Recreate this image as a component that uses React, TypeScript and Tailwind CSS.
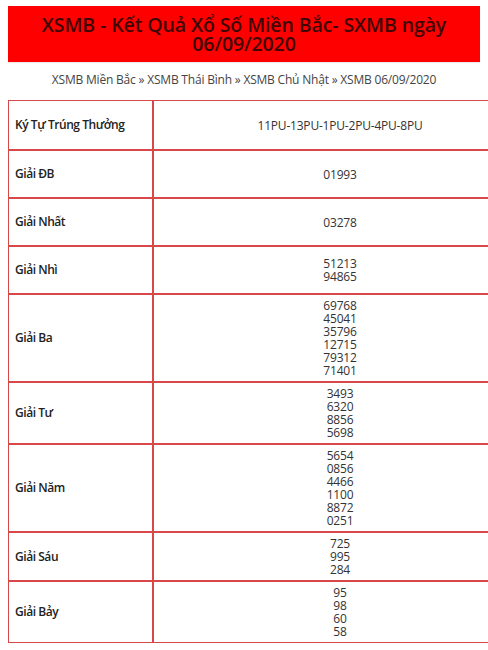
import React from "react";

interface Prize {
  label: string;
  numbers: string[];
}

const prizes: Prize[] = [
  { label: "Ký Tự Trúng Thưởng", numbers: ["11PU-13PU-1PU-2PU-4PU-8PU"] },
  { label: "Giải ĐB", numbers: ["01993"] },
  { label: "Giải Nhất", numbers: ["03278"] },
  { label: "Giải Nhì", numbers: ["51213", "94865"] },
  { label: "Giải Ba", numbers: ["69768", "45041", "35796", "12715", "79312", "71401"] },
  { label: "Giải Tư", numbers: ["3493", "6320", "8856", "5698"] },
  { label: "Giải Năm", numbers: ["5654", "0856", "4466", "1100", "8872", "0251"] },
  { label: "Giải Sáu", numbers: ["725", "995", "284"] },
  { label: "Giải Bảy", numbers: ["95", "98", "60", "58"] },
];

const App: React.FC = () => {
  return (
    <div
      className="w-[488px] h-[650px] overflow-hidden bg-white px-2 pt-[6px]"
      style={{ fontFamily: '"Open Sans", "Noto Sans", sans-serif' }}
    >
      <div className="bg-[#ff0000] h-[56px] flex items-center justify-center shadow-[0_1px_1px_rgba(0,0,0,0.08)]">
        <h1 className="text-[19.5px] leading-[19px] font-semibold text-[#3f0606] text-center tracking-[-0.1px] whitespace-pre-line">
          {"XSMB - Kết Quả Xổ Số Miền Bắc- SXMB ngày\n06/09/2020"}
        </h1>
      </div>

      <div className="text-center text-[12px] text-[#444] mt-[9px] tracking-[-0.2px]">
        XSMB Miền Bắc » XSMB Thái Bình » XSMB Chủ Nhật » XSMB 06/09/2020
      </div>

      <table className="mt-[11px] w-[519px] border border-[#d94848] border-separate border-spacing-0 text-[12px] text-[#222]">
        <tbody>
          {prizes.map((p, i) => (
            <tr key={p.label}>
              <td
                className={`w-[145px] pl-[6px] font-semibold tracking-[-0.45px] border-r-2 border-[#d94848] align-middle ${
                  i > 0 ? "border-t-2" : ""
                }`}
              >
                {p.label}
              </td>
              <td
                className={`text-center align-middle py-[4px] h-[48px] leading-[13px] text-[#333] tracking-[-0.2px] whitespace-pre-line border-[#d94848] ${
                  i > 0 ? "border-t-2" : ""
                }`}
              >
                {p.numbers.join("\n")}
              </td>
            </tr>
          ))}
        </tbody>
      </table>
    </div>
  );
};

export default App;
